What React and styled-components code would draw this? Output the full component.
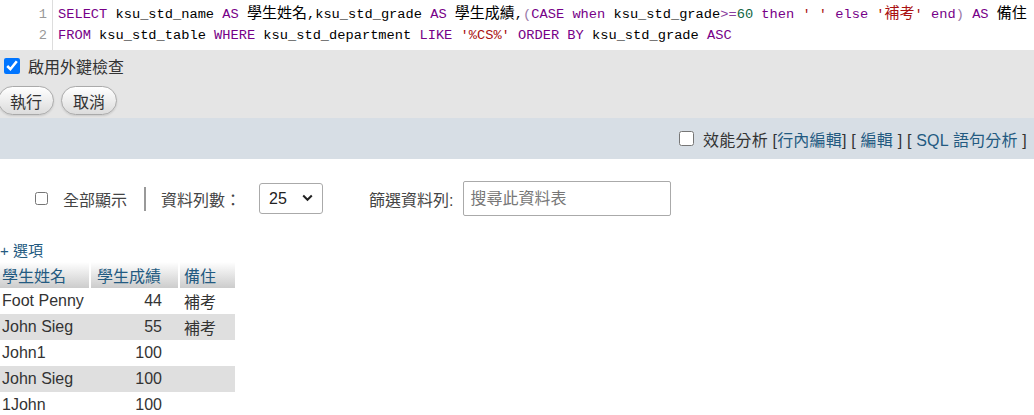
import React from "react";
import styled, { createGlobalStyle } from "styled-components";

const GlobalStyle = createGlobalStyle`
  html, body { margin: 0; padding: 0; background: #fff; }
  body {
    font-family: "Liberation Sans", Arial, "Noto Sans CJK TC", sans-serif;
    font-size: 16px;
    color: #333;
    overflow: hidden;
  }
`;

const Editor = styled.div`
  display: flex;
  height: 50px;
  background: #fff;
`;

const Gutter = styled.div`
  width: 53px;
  border-right: 1px solid #ddd;
  padding-top: 4px;
  box-sizing: border-box;
  text-align: right;
  padding-right: 5px;
  font-family: "Liberation Mono", "Noto Sans CJK TC", monospace;
  font-size: 13.7px;
  line-height: 21px;
  color: #999;
`;

const Code = styled.div`
  padding: 4px 0 0 5px;
  font-family: "Liberation Mono", "Noto Sans CJK TC", monospace;
  font-size: 13.7px;
  line-height: 21px;
  color: #000;
  white-space: pre;
  overflow: hidden;
`;

const Tok = styled.span`
  color: ${(p) =>
    p.$t === "kw" ? "#708" :
    p.$t === "str" ? "#a11" :
    p.$t === "num" ? "#164" :
    p.$t === "op" ? "#8a3d9e" :
    p.$t === "br" ? "#9a7aa8" : "#000"};
`;

const Cjk = styled.span`
  font-size: 15px;
`;

const FormPanel = styled.div`
  background: #e5e5e5;
  height: 68px;
  box-sizing: border-box;
  padding-top: 8px;
  display: flex;
  flex-direction: column;
  gap: 12px;
`;

const CheckLabel = styled.label`
  display: flex;
  align-items: center;
  gap: 8px;
  padding-left: 4px;
  height: 16px;
  color: #333;
  font-size: 16px;
`;

const Check = styled.input.attrs({ type: "checkbox" })`
  margin: 0;
  width: ${(p) => p.$size || 16}px;
  height: ${(p) => p.$size || 16}px;
  accent-color: #0075ff;
`;

const ButtonRow = styled.div`
  display: flex;
  gap: 7px;
  margin-left: -2px;
`;

const Button = styled.button`
  height: 29px;
  padding: 0 11px;
  border: 1px solid #aaa;
  border-radius: 15px;
  background: linear-gradient(#ffffff, #dcdcdc);
  font-family: "Liberation Sans", "Noto Sans CJK TC", sans-serif;
  font-size: 16px;
  color: #333;
  box-shadow: 0 1px 2px rgba(0,0,0,0.12);
`;

const ResultBar = styled.div`
  background: #d7dee5;
  height: 41px;
  display: flex;
  align-items: center;
  justify-content: flex-end;
  padding-right: 7px;
  gap: 9px;
  font-size: 16px;
  color: #333;
`;

const Links = styled.span`
  white-space: pre;
  letter-spacing: 0.2px;
`;

const Link = styled.a`
  color: #235a81;
  text-decoration: none;
`;

const Controls = styled.div`
  display: flex;
  align-items: center;
  height: 35px;
  margin-top: 22px;
  padding-left: 35px;
  font-size: 16px;
  color: #444;
`;

const Label = styled.span`
  margin-left: ${(p) => p.$ml || 0}px;
  white-space: nowrap;
`;

const Separator = styled.span`
  width: 2px;
  height: 24px;
  background: #999;
  margin-left: 17px;
`;

const SelectWrap = styled.div`
  position: relative;
  margin-left: 18px;
  width: 64px;
  height: 31px;
`;

const Select = styled.select`
  appearance: none;
  width: 100%;
  height: 100%;
  border: 1px solid #aaa;
  border-radius: 3px;
  background: #fff;
  padding-left: 9px;
  font-family: "Liberation Sans", sans-serif;
  font-size: 16px;
  color: #222;
`;

const Chevron = styled.svg`
  position: absolute;
  right: 10px;
  top: 11px;
  pointer-events: none;
`;

const SearchInput = styled.input`
  margin-left: 10px;
  width: 208px;
  height: 35px;
  box-sizing: border-box;
  border: 1px solid #aaa;
  border-radius: 2px;
  padding: 0 6px;
  font-family: "Liberation Sans", "Noto Sans CJK TC", sans-serif;
  font-size: 16px;
  &::placeholder { color: #777; }
`;

const Options = styled.div`
  margin-top: 25px;
  height: 20px;
  line-height: 20px;
  font-size: 15px;
  color: #235a81;
`;

const Table = styled.table`
  margin-top: 1px;
  border-collapse: separate;
  border-spacing: 0;
  table-layout: fixed;
  width: 235px;
  font-family: "Liberation Sans", Arial, "Noto Sans CJK TC", sans-serif;
  font-size: 16px;
`;

const Th = styled.th`
  height: 26px;
  box-sizing: border-box;
  width: ${(p) => p.$w}px;
  padding: 0 ${(p) => p.$pr || 0}px 0 ${(p) => p.$pl || 0}px;
  text-align: ${(p) => p.$align || "left"};
  font-weight: normal;
  color: #235a81;
  background: linear-gradient(#ffffff, #cccccc);
  border-right: ${(p) => (p.$last ? "0" : "2px solid #fff")};
  white-space: nowrap;
`;

const Tr = styled.tr`
  background: ${(p) => (p.$even ? "#dfdfdf" : "#fff")};
`;

const Td = styled.td`
  height: 26px;
  box-sizing: border-box;
  padding: 0 ${(p) => p.$pr || 0}px 0 ${(p) => p.$pl || 0}px;
  text-align: ${(p) => p.$align || "left"};
  color: #333;
  border-right: ${(p) => (p.$last ? "0" : "2px solid transparent")};
  white-space: nowrap;
`;

const rows = [
  { name: "Foot Penny", grade: 44, note: "補考" },
  { name: "John Sieg", grade: 55, note: "補考" },
  { name: "John1", grade: 100, note: "" },
  { name: "John Sieg", grade: 100, note: "" },
  { name: "1John", grade: 100, note: "" },
];

export default function App() {
  return (
    <>
      <GlobalStyle />
      <Editor>
        <Gutter>
          <div>1</div>
          <div>2</div>
        </Gutter>
        <Code>
          <div>
            <Tok $t="kw">SELECT</Tok> ksu_std_name <Tok $t="kw">AS</Tok> <Cjk>學生姓名</Cjk>,ksu_std_grade{" "}
            <Tok $t="kw">AS</Tok> <Cjk>學生成績</Cjk>,<Tok $t="br">(</Tok><Tok $t="kw">CASE</Tok>{" "}
            <Tok $t="kw">when</Tok> ksu_std_grade<Tok $t="op">&gt;=</Tok><Tok $t="num">60</Tok>{" "}
            <Tok $t="kw">then</Tok> <Tok $t="str">' '</Tok> <Tok $t="kw">else</Tok>{" "}
            <Tok $t="str">'<Cjk>補考</Cjk>'</Tok> <Tok $t="kw">end</Tok><Tok $t="br">)</Tok>{" "}
            <Tok $t="kw">AS</Tok> <Cjk>備住</Cjk>
          </div>
          <div>
            <Tok $t="kw">FROM</Tok> ksu_std_table <Tok $t="kw">WHERE</Tok> ksu_std_department{" "}
            <Tok $t="kw">LIKE</Tok> <Tok $t="str">'%CS%'</Tok> <Tok $t="kw">ORDER</Tok>{" "}
            <Tok $t="kw">BY</Tok> ksu_std_grade <Tok $t="kw">ASC</Tok>
          </div>
        </Code>
      </Editor>

      <FormPanel>
        <CheckLabel>
          <Check defaultChecked $size={16} />
          啟用外鍵檢查
        </CheckLabel>
        <ButtonRow>
          <Button>執行</Button>
          <Button>取消</Button>
        </ButtonRow>
      </FormPanel>

      <ResultBar>
        <Check $size={15} />
        <Links>
          效能分析 [<Link href="#">行內編輯</Link>] [ <Link href="#">編輯</Link> ] [{" "}
          <Link href="#">SQL 語句分析</Link> ]
        </Links>
      </ResultBar>

      <Controls>
        <Check $size={13} />
        <Label $ml={15}>全部顯示</Label>
        <Separator />
        <Label $ml={15}>資料列數：</Label>
        <SelectWrap>
          <Select defaultValue="25">
            <option>25</option>
            <option>50</option>
            <option>100</option>
          </Select>
          <Chevron width="11" height="8" viewBox="0 0 11 8">
            <path d="M1.2 1.5 L5.5 5.8 L9.8 1.5" fill="none" stroke="#222" strokeWidth="2" />
          </Chevron>
        </SelectWrap>
        <Label $ml={46}>篩選資料列:</Label>
        <SearchInput placeholder="搜尋此資料表" />
      </Controls>

      <Options>+ 選項</Options>

      <Table>
        <thead>
          <tr>
            <Th $w={91} $pl={2}>學生姓名</Th>
            <Th $w={89} $pl={6}>學生成績</Th>
            <Th $w={55} $pl={4} $last>備住</Th>
          </tr>
        </thead>
        <tbody>
          {rows.map((r, i) => (
            <Tr key={i} $even={i % 2 === 1}>
              <Td $pl={2}>{r.name}</Td>
              <Td $align="right" $pr={16}>{r.grade}</Td>
              <Td $pl={4} $last>{r.note}</Td>
            </Tr>
          ))}
        </tbody>
      </Table>
    </>
  );
}
